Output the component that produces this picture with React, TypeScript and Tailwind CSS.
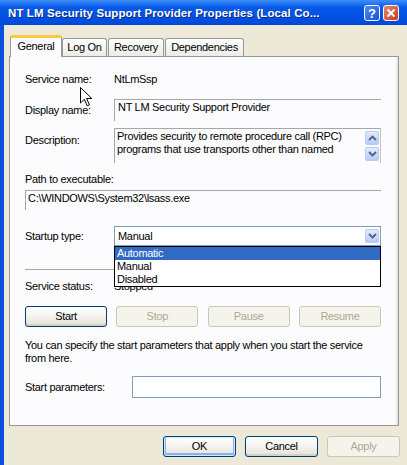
import React from "react";

function XpButton({ text, disabled, focused, className }: { text: string; disabled?: boolean; focused?: boolean; className?: string }) {
  if (disabled) {
    return (
      <div className={`h-[21px] flex items-center justify-center rounded-[3px] border border-[#C9C7BA] bg-[#F5F4EA] text-[#ACA899] ${className ?? ""}`}>
        {text}
      </div>
    );
  }
  return (
    <div
      className={`h-[21px] flex items-center justify-center rounded-[3px] border border-[#003C74] bg-gradient-to-b from-white via-[#F4F3EE] to-[#E3E1D6] text-black ${
        focused ? "shadow-[inset_0_0_0_1px_#CEE7FF,inset_0_-1px_0_2px_#8BB0EF]" : "shadow-[inset_0_-2px_0_#D6D0C5]"
      } ${className ?? ""}`}
    >
      {text}
    </div>
  );
}

function Chevron({ up }: { up?: boolean }) {
  return (
    <svg width="9" height="6" viewBox="0 0 9 6">
      <path d={up ? "M1 5 L4.5 1.5 L8 5" : "M1 1 L4.5 4.5 L8 1"} fill="none" stroke="#4D6185" strokeWidth="1.8" />
    </svg>
  );
}

function ScrollBtn({ up }: { up?: boolean }) {
  return (
    <div className="w-[14px] h-[14px] flex items-center justify-center rounded-[2px] border border-[#B9CBF3] bg-gradient-to-b from-[#E2EBFE] to-[#B7CAF5]">
      <Chevron up={up} />
    </div>
  );
}

function Tab({ text, active, className }: { text: string; active?: boolean; className?: string }) {
  if (active) {
    return (
      <div className={`relative z-10 -mb-px h-[22px] flex items-center justify-center bg-[#FCFCFE] border-x border-[#919B9C] rounded-t-[3px] border-t-[3px] border-t-[#FFC83C] pb-[2px] ${className ?? ""}`}>
        {text}
      </div>
    );
  }
  return (
    <div className={`h-[18px] flex items-center justify-center border border-b-0 border-[#919B9C] rounded-t-[3px] bg-gradient-to-b from-white to-[#ECEBE6] ${className ?? ""}`}>
      {text}
    </div>
  );
}

export default function App() {
  return (
    <div className="w-[407px] h-[465px] overflow-hidden bg-[#0B4FE0] font-['Liberation_Sans',Arial,sans-serif] text-[11px] leading-[13px] text-black relative">
      {/* title bar */}
      <div className="h-[25px] flex items-center pl-[8px] pr-[8px] bg-gradient-to-b from-[#3D8EF8] via-[#0659EA] via-30% to-[#0049DA]">
        <div className="text-white font-bold text-[11.5px] tracking-[0.1px] [text-shadow:1px_1px_0_#0A2A80] pt-[2px]">
          NT LM Security Support Provider Properties (Local Co...
        </div>
        <div className="ml-auto flex gap-[3px] pt-[1px]">
          <div className="w-[16px] h-[16px] rounded-[3px] border border-white bg-gradient-to-br from-[#4F8CF6] to-[#1A4ED8] flex items-center justify-center text-white font-bold text-[13px]">
            ?
          </div>
          <div className="w-[16px] h-[16px] rounded-[3px] border border-white bg-gradient-to-br from-[#E9866A] to-[#C8391C] flex items-center justify-center">
            <svg width="10" height="10" viewBox="0 0 10 10">
              <path d="M1.5 1.5 L8.5 8.5 M8.5 1.5 L1.5 8.5" stroke="white" strokeWidth="2" />
            </svg>
          </div>
        </div>
      </div>

      {/* body */}
      <div className="ml-[4px] h-[440px] bg-[#ECE9D8] pl-[5px] pr-[8px] pt-[10px] tracking-[-0.3px]">
        {/* tabs */}
        <div className="flex items-end h-[21px] pl-[1px]">
          <Tab text="General" active className="w-[52px]" />
          <Tab text="Log On" className="w-[45px] mr-[1px]" />
          <Tab text="Recovery" className="w-[56px] mr-[1px]" />
          <Tab text="Dependencies" className="w-[79px]" />
        </div>

        {/* panel */}
        <div className="relative h-[370px] w-[390px] border border-[#919B9C] bg-[#FCFCFE] pl-[15px] pr-[17px] shadow-[inset_-3px_0_3px_-2px_#D8D6CC]">
          <div className="flex mt-[16px]">
            <div className="w-[89px]">Service name:</div>
            <div>NtLmSsp</div>
          </div>

          <div className="flex mt-[13px] h-[22px]">
            <div className="w-[89px] pt-[5px]">Display name:</div>
            <div className="flex-1 border-t border-l border-[#A7A6AA] pl-[3px] pt-[1px]">NT LM Security Support Provider</div>
          </div>

          <div className="flex mt-[7px] h-[35px]">
            <div className="w-[89px] pt-[6px]">Description:</div>
            <div className="flex-1 flex border-t border-l border-r border-[#C5C5C5] border-t-[#A7A6AA] border-l-[#A7A6AA]">
              <div className="flex-1 pl-[2px] pt-[1px] whitespace-nowrap">
                Provides security to remote procedure call (RPC)
                <br />
                programs that use transports other than named
              </div>
              <div className="flex flex-col gap-[2px] pt-[2px] pr-[1px]">
                <ScrollBtn up />
                <ScrollBtn />
              </div>
            </div>
          </div>

          <div className="mt-[10px]">Path to executable:</div>
          <div className="mt-[4px] h-[20px] border-t border-l border-[#A7A6AA] pl-[2px] pt-[1px]">C:\WINDOWS\System32\lsass.exe</div>

          <div className="flex items-center mt-[16px] h-[20px]">
            <div className="w-[89px]">Startup type:</div>
            <div className="relative flex-1 h-[20px] border border-[#7F9DB9] bg-white flex items-center pl-[3px]">
              <div>Manual</div>
              <div className="ml-auto mr-[1px]">
                <ScrollBtn />
              </div>
              {/* open list */}
              <div className="absolute z-20 left-[-1px] right-[-1px] top-[19px] border border-black bg-white">
                <div className="h-[13px] bg-[#316AC5] text-white pl-[2px]">Automatic</div>
                <div className="h-[13px] pl-[2px]">Manual</div>
                <div className="h-[13px] pl-[2px]">Disabled</div>
              </div>
            </div>
          </div>

          <div className="mt-[23px] border-t border-[#A7A6AA]" />

          <div className="flex mt-[10px]">
            <div className="w-[89px]">Service status:</div>
            <div>Stopped</div>
          </div>

          <div className="flex justify-between mt-[13px]">
            <XpButton text="Start" className="w-[82px]" focused={false} />
            <XpButton text="Stop" disabled className="w-[82px]" />
            <XpButton text="Pause" disabled className="w-[82px]" />
            <XpButton text="Resume" disabled className="w-[82px]" />
          </div>

          <div className="mt-[12px] whitespace-nowrap">
            You can specify the start parameters that apply when you start the service
            <br />
            from here.
          </div>

          <div className="flex items-center mt-[11px] h-[22px]">
            <div className="w-[107px]">Start parameters:</div>
            <div className="flex-1 h-[22px] border border-[#7F9DB9] bg-white" />
          </div>

          {/* mouse cursor */}
          <svg className="absolute left-[70px] top-[30px] z-30" width="13" height="20" viewBox="0 0 13 20">
            <path d="M0.5 0.5 L0.5 16 L4.3 12.3 L7.2 18.8 L9.4 17.8 L6.6 11.5 L11.8 11.5 Z" fill="white" stroke="black" strokeWidth="1" />
          </svg>
        </div>

        {/* bottom buttons */}
        <div className="flex justify-end gap-[9px] mt-[10px] -mr-[1px]">
          <XpButton text="OK" focused className="w-[73px]" />
          <XpButton text="Cancel" className="w-[73px]" />
          <XpButton text="Apply" disabled className="w-[73px]" />
        </div>
      </div>
    </div>
  );
}
